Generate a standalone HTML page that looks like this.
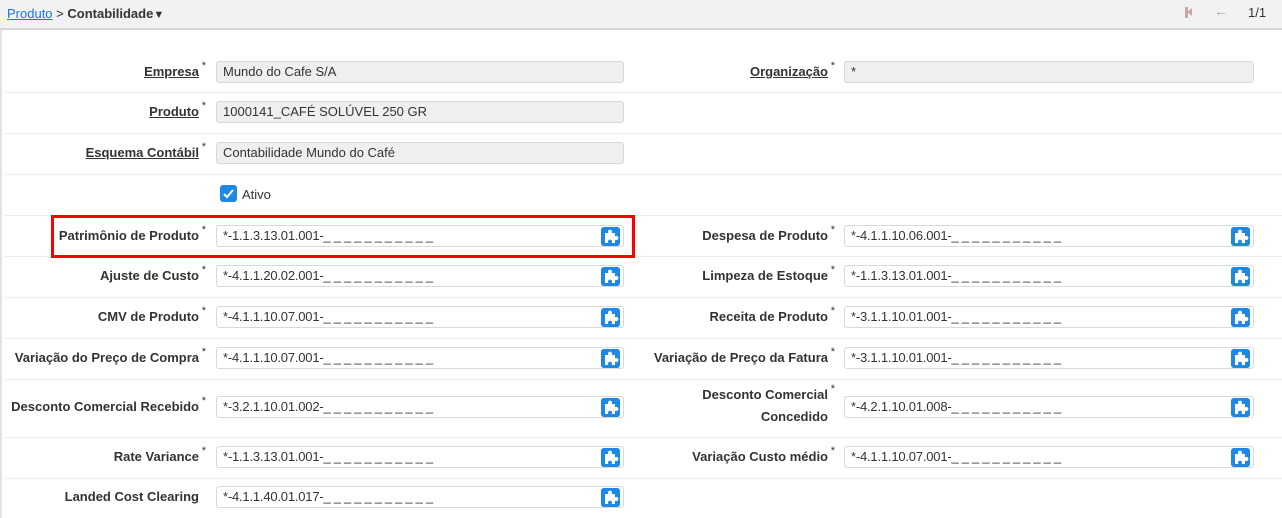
<!DOCTYPE html><html><head><meta charset="utf-8"><style>
*{box-sizing:border-box;margin:0;padding:0}
body{width:1282px;height:518px;overflow:hidden;background:#fff;font-family:"Liberation Sans",Arial,sans-serif;font-size:13px;color:#333;position:relative}
.hdr{position:absolute;left:0;top:0;width:1282px;height:30px;background:#f2f2f2;border-bottom:2px solid #d6d6d6}
.lb{position:absolute;font-weight:bold;color:#333;text-align:right;white-space:nowrap;line-height:22px}
.lb sup{font-weight:normal;font-size:11px;position:absolute;right:-7px;top:-6px}
.lb u{text-decoration:underline}
.in{position:absolute;height:22px;border:1px solid #d9d9d9;border-radius:3px;background:#fff;padding-left:6px;line-height:20px;white-space:nowrap;letter-spacing:-0.2px}
.in.d{background:#efefef;letter-spacing:0}
.ic{position:absolute;right:3px;top:1px;width:19px;height:19px;border-radius:3px;background:#1e88e5}
.sep{position:absolute;left:4px;width:1278px;height:1px;background:#eee}
</style></head><body>
<div class="hdr"></div>
<div style="position:absolute;left:0;top:30px;width:2px;height:488px;background:#e3e3e3"></div>
<div style="position:absolute;left:7px;top:6px;font-size:13px"><span style="color:#1a73e8;text-decoration:underline">Produto</span> &gt; <b style="color:#333">Contabilidade</b><span style="font-size:11px">&#9660;</span></div>
<div style="position:absolute;left:1185px;top:7px;width:3px;height:11px;background:#c8a8a8"></div>
<div style="position:absolute;left:1187px;top:8px;width:0;height:0;border-top:4px solid transparent;border-bottom:4px solid transparent;border-right:5px solid #c8a8a8"></div>
<div style="position:absolute;left:1214px;top:3px;color:#aaa;font-size:14px">&#8592;</div>
<div style="position:absolute;left:1248px;top:5px;color:#333">1/1</div>
<div id="c"></div>
<script>
var rows=[
[72,'<u>Empresa</u>','Mundo do Cafe S/A',1,'<u>Organização</u>','*',1],
[112,'<u>Produto</u>','1000141_CAFÉ SOLÚVEL 250 GR',1],
[153,'<u>Esquema Contábil</u>','Contabilidade Mundo do Café',1],
[236,'Patrimônio de Produto','*-1.1.3.13.01.001-',0,'Despesa de Produto','*-4.1.1.10.06.001-',0],
[276,'Ajuste de Custo','*-4.1.1.20.02.001-',0,'Limpeza de Estoque','*-1.1.3.13.01.001-',0],
[317,'CMV de Produto','*-4.1.1.10.07.001-',0,'Receita de Produto','*-3.1.1.10.01.001-',0],
[358,'Variação do Preço de Compra','*-4.1.1.10.07.001-',0,'Variação de Preço da Fatura','*-3.1.1.10.01.001-',0],
[407,'Desconto Comercial Recebido','*-3.2.1.10.01.002-',0,'Desconto Comercial<br>Concedido','*-4.2.1.10.01.008-',0],
[457,'Rate Variance','*-1.1.3.13.01.001-',0,'Variação Custo médio','*-4.1.1.10.07.001-',0],
[497,'Landed Cost Clearing','*-4.1.1.40.01.017-',0]];
var h='';
var u='<span style="letter-spacing:-0.3px">_ _ _ _ _ _ _ _ _ _ _</span>';
var puz='<svg class="ic" viewBox="0 0 19 19"><rect width="19" height="19" rx="3" fill="#1e88e5"/><path d="M4 6h3.5a2 2 0 1 1 3 0H14v3.5a2 2 0 1 1 0 3V16h-3.5a2 2 0 1 0-3 0H4z" fill="#fff"/></svg>';
function fld(x,w,y,lab,val,dis,lr){
 var two=lab.indexOf('<br>')>0;
 h+='<div class="lb" style="right:'+(1282-lr)+'px;top:'+(two?y-23:y-11)+'px">'+lab+(lab.indexOf('Landed')==0?'':'<sup>*</sup>')+'</div>';
 h+='<div class="in'+(dis?' d':'')+'" style="left:'+x+'px;width:'+w+'px;top:'+(y-11)+'px">'+val+(dis?'':u+puz)+'</div>';
}
rows.forEach(function(r){fld(216,408,r[0],r[1],r[2],r[3],199);if(r[4])fld(844,410,r[0],r[4],r[5],r[6],828);});
[92,133,174,215,256,297,338,379,437,478].forEach(function(y){h+='<div class="sep" style="top:'+y+'px"></div>'});
h+='<div style="position:absolute;left:220px;top:185px;width:17px;height:17px;border-radius:3px;background:#1e88e5"><svg width="17" height="17" viewBox="0 0 17 17"><path d="M4 9l3 3 6-7" stroke="#fff" stroke-width="2" fill="none"/></svg></div><div style="position:absolute;left:242px;top:187px">Ativo</div>';
h+='<div style="position:absolute;left:51px;top:215px;width:584px;height:43px;border:3px solid #f00"></div>';
document.getElementById('c').innerHTML=h;
</script>
</body></html>
